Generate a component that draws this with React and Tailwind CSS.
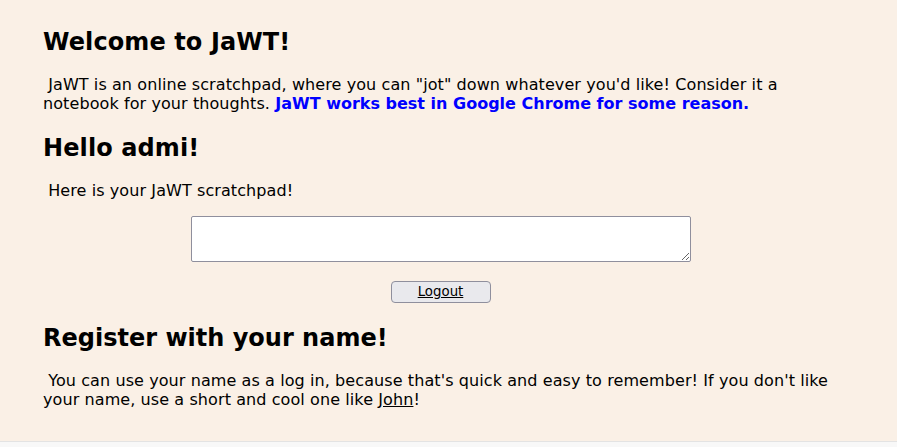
export default function App() {
  return (
    <div className="min-h-[447px] bg-[#f8f8f8]">
      <div
        className="bg-[#faf0e6] border-b border-[#e3e3e3] h-[442px] pl-[43px] pt-[8px] text-black text-[16px] leading-[18.8px] tracking-[0.09px]"
        style={{ fontFamily: '"DejaVu Sans", Verdana, sans-serif' }}
      >
        <div className="w-[795px]">
          <h2 className="text-[24px] font-bold leading-[28px] tracking-[0.1px] mt-[20px] mb-[20px]">Welcome to JaWT!</h2>
          <p className="my-[16px]">
            {"\u00a0"}JaWT is an online scratchpad, where you can "jot" down whatever you'd like! Consider it a notebook for your thoughts.{" "}
            <span className="font-bold text-[#0000ff] tracking-[0px]">JaWT works best in Google Chrome for some reason.</span>
          </p>
          <h2 className="text-[24px] font-bold leading-[28px] tracking-[0.1px] mt-[20px] mb-[20px]">Hello admi!</h2>
          <p className="my-[16px]">{"\u00a0"}Here is your JaWT scratchpad!</p>
          <div className="flex flex-col items-center">
            <textarea className="block w-[500px] h-[46px] bg-white border border-[#8f8f9d] rounded-[2px] outline-none resize" />
            <button className="mt-[19px] w-[100px] h-[22px] bg-[#e9e9ed] border border-[#8f8f9d] rounded-[4px] text-[13.33px] leading-[16px] tracking-normal underline">
              Logout
            </button>
          </div>
          <h2 className="text-[24px] font-bold leading-[28px] tracking-[0px] mt-[21px] mb-[20px]">Register with your name!</h2>
          <p className="my-[16px]">
            {"\u00a0"}You can use your name as a log in, because that's quick and easy to remember! If you don't like your name, use a short and cool one like <span className="underline">John</span>!
          </p>
        </div>
      </div>
    </div>
  );
}
